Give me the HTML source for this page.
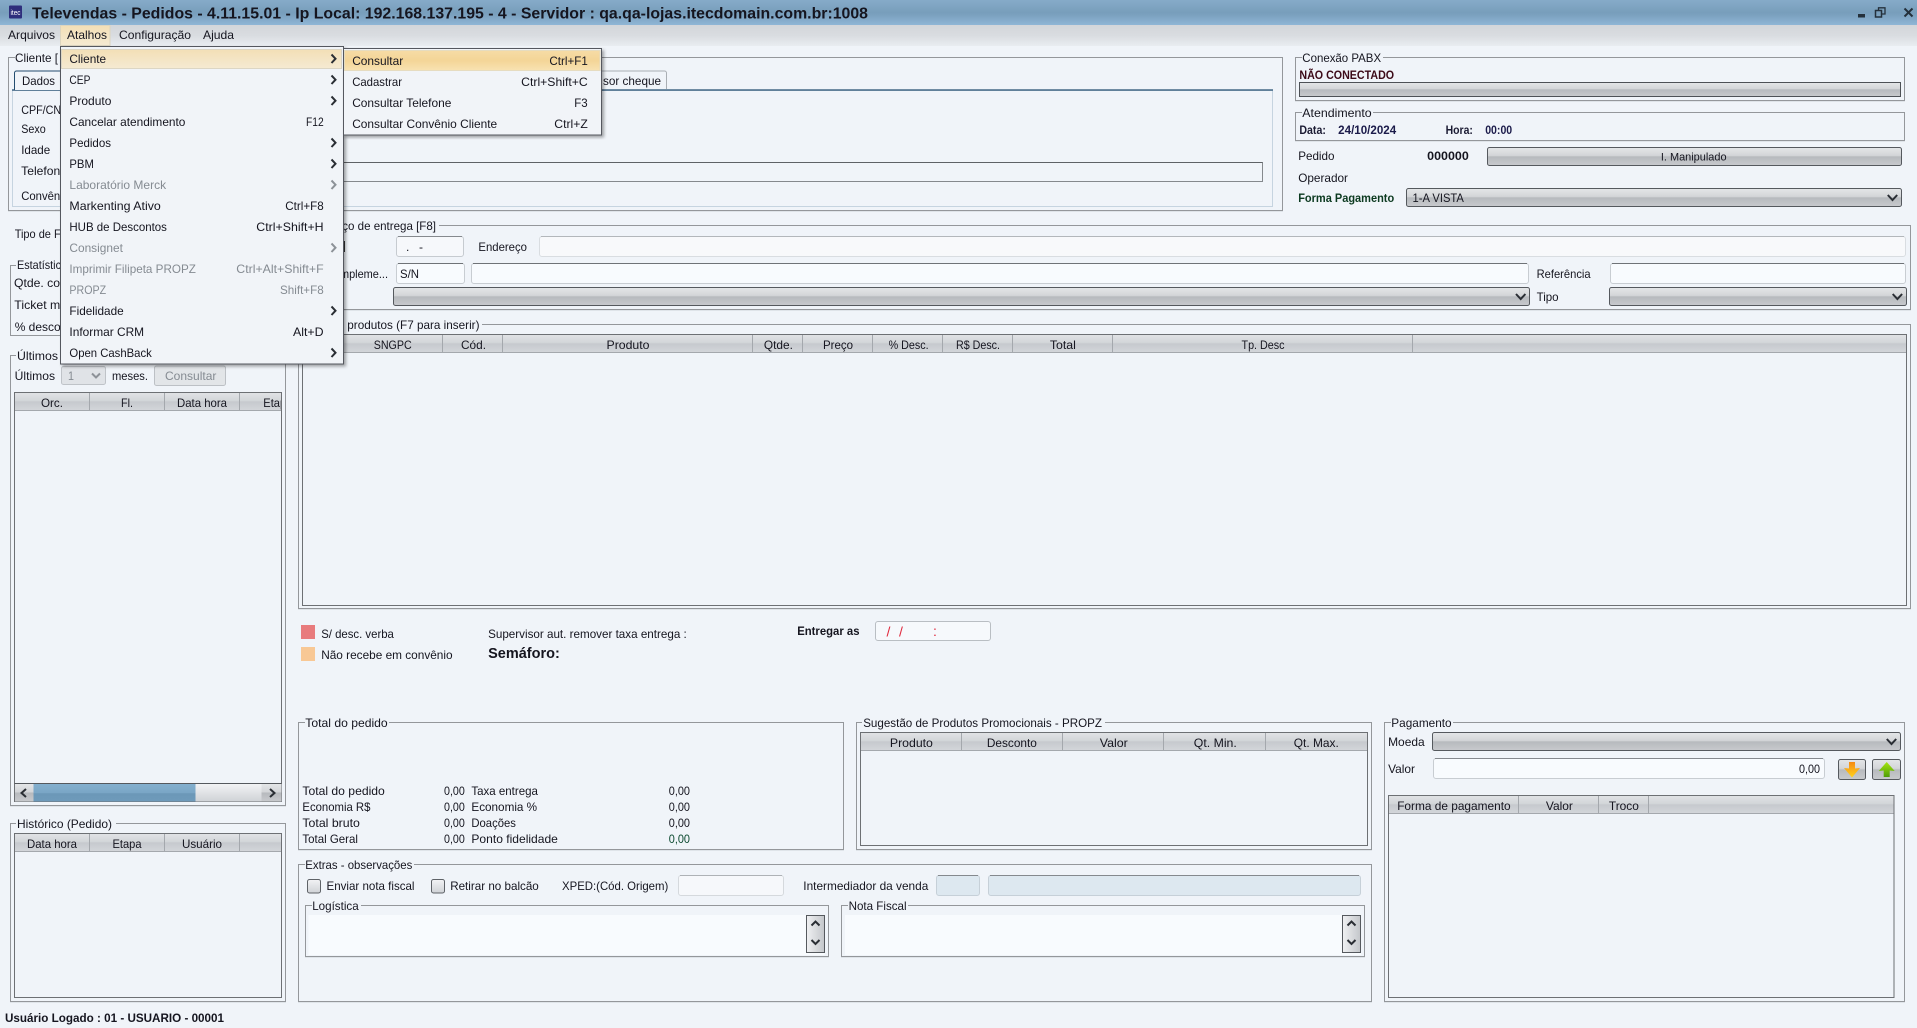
<!DOCTYPE html>
<html lang="pt-BR"><head><meta charset="utf-8"><title>Televendas - Pedidos</title>
<style>
html,body{margin:0;padding:0;background:#f0f4f9;overflow:hidden}
svg{display:block}
text{font-family:"Liberation Sans",sans-serif;font-size:12px;fill:#15151f}
.b{font-weight:bold}
.g{fill:#858b92}
.ln{fill:none;stroke:#94979b;stroke-width:1}
.lt{fill:none;stroke:#dfe4e9;stroke-width:1}
.ch{fill:none;stroke:#2a2e34;stroke-width:2}
.chg{fill:none;stroke:#8d9298;stroke-width:2}
.tb{fill:none;stroke:#6d7074;stroke-width:1}
.sep{stroke:#a4a8ad;stroke-width:1}
</style></head><body>
<svg xmlns="http://www.w3.org/2000/svg" width="1917" height="1028" viewBox="0 0 1917 1028">
<defs>
<linearGradient id="tg" x1="0" y1="0" x2="0" y2="1"><stop offset="0" stop-color="#86abc9"/><stop offset=".5" stop-color="#789ebb"/><stop offset=".6" stop-color="#7ba1bf"/><stop offset="1" stop-color="#8fb6d6"/></linearGradient>
<linearGradient id="mg" x1="0" y1="0" x2="0" y2="1"><stop offset="0" stop-color="#d3d6da"/><stop offset=".5" stop-color="#d9dce0"/><stop offset="1" stop-color="#e9edf1"/></linearGradient>
<linearGradient id="cb" x1="0" y1="0" x2="0" y2="1"><stop offset="0" stop-color="#e4e6e8"/><stop offset=".45" stop-color="#d3d5d8"/><stop offset=".52" stop-color="#b7babe"/><stop offset="1" stop-color="#c8cacd"/></linearGradient>
<linearGradient id="hd" x1="0" y1="0" x2="0" y2="1"><stop offset="0" stop-color="#e1e3e6"/><stop offset=".45" stop-color="#d3d6d9"/><stop offset=".52" stop-color="#c6c9ce"/><stop offset="1" stop-color="#d3d6da"/></linearGradient>
<linearGradient id="hl" x1="0" y1="0" x2="0" y2="1"><stop offset="0" stop-color="#f6dca6"/><stop offset=".5" stop-color="#f4d597"/><stop offset="1" stop-color="#f8e2b2"/></linearGradient>
<linearGradient id="hl2" x1="0" y1="0" x2="0" y2="1"><stop offset="0" stop-color="#f3dfb6"/><stop offset="1" stop-color="#f5ead2"/></linearGradient>
<linearGradient id="th" x1="0" y1="0" x2="0" y2="1"><stop offset="0" stop-color="#84b0cf"/><stop offset=".5" stop-color="#7aa6c6"/><stop offset=".55" stop-color="#6c98b8"/><stop offset="1" stop-color="#6e9aba"/></linearGradient>
<linearGradient id="tr" x1="0" y1="0" x2="0" y2="1"><stop offset="0" stop-color="#f2f3f5"/><stop offset="1" stop-color="#cfd2d6"/></linearGradient>
<linearGradient id="vs" x1="0" y1="0" x2="1" y2="0"><stop offset="0" stop-color="#f0f1f3"/><stop offset="1" stop-color="#c3c6ca"/></linearGradient>
<linearGradient id="org" x1="0" y1="0" x2="0" y2="1"><stop offset="0" stop-color="#f58a12"/><stop offset="1" stop-color="#ffd21e"/></linearGradient>
<linearGradient id="grn" x1="0" y1="0" x2="0" y2="1"><stop offset="0" stop-color="#a6e60e"/><stop offset="1" stop-color="#4f9e08"/></linearGradient>
<clipPath id="c1"><rect x="14" y="392" width="267" height="20"/></clipPath>
<filter id="sh" x="-5%" y="-5%" width="110%" height="110%"><feDropShadow dx="2" dy="2" stdDeviation="1.5" flood-color="#000" flood-opacity=".35"/></filter>
</defs>

<rect width="1917" height="1028" fill="#f0f4f9"/>
<!-- title bar -->
<rect width="1917" height="25" fill="url(#tg)"/>
<rect x="9" y="5.5" width="13" height="13" rx="1" fill="#2e2e7c"/>
<text x="10.5" y="15" style="font-size:7px;fill:#fff" textLength="10" lengthAdjust="spacingAndGlyphs">itec</text>
<text class="b" x="32" y="18.5" style="font-size:15.5px" textLength="836" lengthAdjust="spacingAndGlyphs">Televendas - Pedidos - 4.11.15.01 - Ip Local: 192.168.137.195 - 4 - Servidor : qa.qa-lojas.itecdomain.com.br:1008</text>
<rect x="1858" y="14" width="7" height="3.5" fill="#24303b"/>
<rect x="1875.5" y="10.5" width="6" height="6.5" fill="none" stroke="#24303b" stroke-width="1.5"/>
<path d="M1878.5 10V7.8H1885V14H1882" fill="none" stroke="#24303b" stroke-width="1.3"/>
<path d="M1904.5 8.5L1912.5 16.5M1912.5 8.5L1904.5 16.5" stroke="#24303b" stroke-width="2" fill="none"/>
<!-- menu bar -->
<rect y="25" width="1917" height="21" fill="url(#mg)"/>
<rect x="60.5" y="25.5" width="49.5" height="20" fill="url(#hl2)" stroke="#ddd5bf"/>
<text x="8" y="39" textLength="47" lengthAdjust="spacingAndGlyphs">Arquivos</text>
<text x="67" y="39" textLength="40" lengthAdjust="spacingAndGlyphs">Atalhos</text>
<text x="119" y="39" textLength="72" lengthAdjust="spacingAndGlyphs">Configuração</text>
<text x="203" y="39" textLength="31" lengthAdjust="spacingAndGlyphs">Ajuda</text>

<!-- Cliente group -->
<path class="ln" d="M15 57.5H8.5V210.5H1282.5V57.5H60"/>
<path class="lt" d="M8 211.5H1283"/>
<text x="15" y="62" textLength="43" lengthAdjust="spacingAndGlyphs">Cliente [</text>
<path d="M12.5 90.5H1272.5V206.5H12.5Z" fill="none" stroke="#c6d4e0"/>
<path d="M12 90H1273" stroke="#234d70" stroke-width="1.2"/>
<path d="M14.5 90V73a2 2 0 0 1 2-2H64V90" fill="#f0f4f9" stroke="#234d70"/>
<text x="22" y="85" textLength="33" lengthAdjust="spacingAndGlyphs">Dados</text>
<path d="M340 71H664.5a2 2 0 0 1 2 2V89" fill="#f0f4f9" stroke="#a9aeb3"/>
<text x="603" y="85" textLength="58" lengthAdjust="spacingAndGlyphs">sor cheque</text>
<text x="21.2" y="114" textLength="40" lengthAdjust="spacingAndGlyphs">CPF/CN</text>
<text x="21.2" y="133" textLength="24.5" lengthAdjust="spacingAndGlyphs">Sexo</text>
<text x="21.2" y="154" textLength="29" lengthAdjust="spacingAndGlyphs">Idade</text>
<text x="21.2" y="175" textLength="39" lengthAdjust="spacingAndGlyphs">Telefon</text>
<text x="21.2" y="200" textLength="39" lengthAdjust="spacingAndGlyphs">Convên</text>
<path d="M340 162.5H1262.5V181.5H340" fill="none" stroke="#5e6266"/>
<path d="M340 181.5H1262.5V162.5" fill="none" stroke="#85898d"/>

<text x="14.7" y="238" textLength="46" lengthAdjust="spacingAndGlyphs">Tipo de F</text>

<!-- Estatisticas -->
<path class="ln" d="M16 265.5H10.5V335.5H62"/>
<text x="17" y="269" textLength="44" lengthAdjust="spacingAndGlyphs">Estatístic</text>
<text x="14" y="287" textLength="46" lengthAdjust="spacingAndGlyphs">Qtde. co</text>
<text x="14.3" y="309" textLength="46" lengthAdjust="spacingAndGlyphs">Ticket m</text>
<text x="14.7" y="331" textLength="46" lengthAdjust="spacingAndGlyphs">% desco</text>

<!-- Ultimos group -->
<path class="ln" d="M16 355.5H10.5V805.5H285.5V355.5H60"/>
<path class="lt" d="M10 806.5H286"/>
<text x="17" y="360" textLength="41" lengthAdjust="spacingAndGlyphs">Últimos</text>
<text x="14.7" y="380" textLength="40.4" lengthAdjust="spacingAndGlyphs">Últimos</text>
<rect x="61.5" y="366.5" width="44" height="18" rx="2" fill="#e0e3e7" stroke="#bfc3c8"/>
<text class="g" x="68" y="380" textLength="6" lengthAdjust="spacingAndGlyphs">1</text>
<path class="chg" d="M92 373.5L96 377.5L100 373.5"/>
<text x="112" y="380" textLength="36" lengthAdjust="spacingAndGlyphs">meses.</text>
<rect x="154.5" y="366" width="71" height="19.5" rx="2" fill="#e2e5e8" stroke="#bcc0c5"/>
<text class="g" x="165" y="380" textLength="51.4" lengthAdjust="spacingAndGlyphs">Consultar</text>

<rect x="14.5" y="392.5" width="267" height="18" fill="url(#hd)"/>
<path class="sep" d="M89.5 393V410M164.5 393V410M239.5 393V410M14.5 410.5H281.5"/>
<text x="52" y="407" text-anchor="middle" textLength="22" lengthAdjust="spacingAndGlyphs">Orc.</text>
<text x="127" y="407" text-anchor="middle" textLength="12" lengthAdjust="spacingAndGlyphs">Fl.</text>
<text x="202" y="407" text-anchor="middle" textLength="50" lengthAdjust="spacingAndGlyphs">Data hora</text>
<text x="263.3" y="407" clip-path="url(#c1)" textLength="29" lengthAdjust="spacingAndGlyphs">Etapa</text>
<rect x="14.5" y="392.5" width="267" height="409" class="tb"/>
<rect x="15" y="784" width="266" height="17.5" fill="url(#tr)"/>
<rect x="15" y="784" width="18.5" height="17.5" fill="url(#cb)"/>
<rect x="33.5" y="784" width="162" height="17.5" fill="url(#th)"/>
<rect x="261.5" y="784" width="20" height="17.5" fill="url(#cb)"/>
<path d="M14.5 783.5H281.5" stroke="#55595e"/>
<path class="ch" d="M26 789L21.5 793L26 797"/>
<path class="ch" d="M270 789L274.5 793L270 797"/>

<!-- Historico -->
<path class="ln" d="M16 823.5H10.5V1001.5H285.5V823.5H116"/>
<path class="lt" d="M10 1002.5H286"/>
<text x="17" y="828" textLength="95" lengthAdjust="spacingAndGlyphs">Histórico (Pedido)</text>
<rect x="14.5" y="833.5" width="267" height="18" fill="url(#hd)"/>
<path class="sep" d="M89.5 834V851M164.5 834V851M239.5 834V851M14.5 851.5H281.5"/>
<text x="52" y="848" text-anchor="middle" textLength="50" lengthAdjust="spacingAndGlyphs">Data hora</text>
<text x="127" y="848" text-anchor="middle" textLength="29" lengthAdjust="spacingAndGlyphs">Etapa</text>
<text x="202" y="848" text-anchor="middle" textLength="40" lengthAdjust="spacingAndGlyphs">Usuário</text>
<rect x="14.5" y="833.5" width="267" height="164" class="tb"/>
<text class="b" x="5" y="1022" textLength="219" lengthAdjust="spacingAndGlyphs">Usuário Logado : 01 - USUARIO - 00001</text>

<!-- Endereco group -->
<path class="ln" d="M298.5 225.5V309.5H1910.5V225.5H439"/>
<path class="lt" d="M298 310.5H1911"/>
<text x="305" y="230" textLength="131" lengthAdjust="spacingAndGlyphs">Endereço de entrega [F8]</text>
<path d="M344.5 241V252" stroke="#333"/>
<rect x="396.5" y="236.5" width="67" height="20" rx="2.5" fill="#f6f8fb" stroke="#c6cbd0"/>
<path d="M398 236.5H462" stroke="#85898e"/>
<text x="406" y="251">.</text><text x="419" y="251">-</text>
<text x="478.4" y="251" textLength="48.6" lengthAdjust="spacingAndGlyphs">Endereço</text>
<rect x="539.5" y="236.5" width="1366" height="20" rx="2.5" fill="#f8f9fb" stroke="#d9dde1"/>
<path d="M541 236.5H1904" stroke="#b3b7bb"/>
<text x="326" y="278" textLength="62" lengthAdjust="spacingAndGlyphs">Compleme...</text>
<rect x="396.5" y="263.5" width="68" height="20" rx="2.5" fill="#f8fbfe" stroke="#c8cdd2"/>
<path d="M398 263.5H463" stroke="#6f7377"/>
<text x="400" y="278" textLength="19" lengthAdjust="spacingAndGlyphs">S/N</text>
<rect x="471.5" y="263.5" width="1057" height="20" rx="2.5" fill="#f8fbfe" stroke="#c8cdd2"/>
<path d="M473 263.5H1527" stroke="#6f7377"/>
<text x="1536.6" y="278" textLength="54" lengthAdjust="spacingAndGlyphs">Referência</text>
<rect x="1610.5" y="263.5" width="295" height="20" rx="2.5" fill="#f8fbfe" stroke="#c8cdd2"/>
<path d="M1612 263.5H1904" stroke="#6f7377"/>
<rect x="393.5" y="287.5" width="1136" height="18" rx="2" fill="url(#cb)" stroke="#55595e"/>
<path class="ch" d="M1516 294L1520.7 299L1525.4 294"/>
<text x="1536.6" y="301" textLength="22" lengthAdjust="spacingAndGlyphs">Tipo</text>
<rect x="1609.5" y="287.5" width="297" height="18" rx="2" fill="url(#cb)" stroke="#55595e"/>
<path class="ch" d="M1892.7 294L1897.4 299L1902.1 294"/>

<!-- Produtos -->
<path class="ln" d="M298.5 324.5V608.5H1910.5V324.5H482"/>
<path class="lt" d="M298 609.5H1911"/>
<text x="337.5" y="329" textLength="142" lengthAdjust="spacingAndGlyphs">e produtos (F7 para inserir)</text>
<rect x="302.5" y="334.5" width="1604" height="18" fill="url(#hd)"/>
<path class="sep" d="M442.5 335V352M502.5 335V352M752.5 335V352M802.5 335V352M872.5 335V352M942.5 335V352M1012.5 335V352M1112.5 335V352M1412.5 335V352M302.5 352.5H1906"/>
<text x="392.7" y="349" text-anchor="middle" textLength="38" lengthAdjust="spacingAndGlyphs">SNGPC</text>
<text x="473.5" y="349" text-anchor="middle" textLength="25" lengthAdjust="spacingAndGlyphs">Cód.</text>
<text x="628" y="349" text-anchor="middle" textLength="43" lengthAdjust="spacingAndGlyphs">Produto</text>
<text x="778.4" y="349" text-anchor="middle" textLength="29" lengthAdjust="spacingAndGlyphs">Qtde.</text>
<text x="838" y="349" text-anchor="middle" textLength="30" lengthAdjust="spacingAndGlyphs">Preço</text>
<text x="908.6" y="349" text-anchor="middle" textLength="40" lengthAdjust="spacingAndGlyphs">% Desc.</text>
<text x="978" y="349" text-anchor="middle" textLength="44" lengthAdjust="spacingAndGlyphs">R$ Desc.</text>
<text x="1062.9" y="349" text-anchor="middle" textLength="26" lengthAdjust="spacingAndGlyphs">Total</text>
<text x="1263" y="349" text-anchor="middle" textLength="43" lengthAdjust="spacingAndGlyphs">Tp. Desc</text>
<rect x="302.5" y="334.5" width="1604" height="271" class="tb"/>

<!-- Conexao PABX -->
<path class="ln" d="M1302 57.5H1295.5V100.5H1904.5V57.5H1383"/>
<path class="lt" d="M1295 101.5H1905"/>
<text x="1302.3" y="62" textLength="78.8" lengthAdjust="spacingAndGlyphs">Conexão PABX</text>
<text class="b" x="1299.4" y="79" style="fill:#3c0a18" textLength="94.7" lengthAdjust="spacingAndGlyphs">NÃO CONECTADO</text>
<rect x="1299.5" y="82.5" width="601" height="14" fill="url(#cb)" stroke="#4d5156"/>
<!-- Atendimento -->
<path class="ln" d="M1302 112.5H1295.5V140.5H1904.5V112.5H1373"/>
<path class="lt" d="M1295 141.5H1905"/>
<text x="1302.3" y="117" textLength="69.4" lengthAdjust="spacingAndGlyphs">Atendimento</text>
<text class="b" x="1299.4" y="134" style="font-size:11.5px;fill:#1b1b33" textLength="26.5" lengthAdjust="spacingAndGlyphs">Data:</text>
<text class="b" x="1338.2" y="134" style="font-size:11.5px;fill:#1b1b4a" textLength="58" lengthAdjust="spacingAndGlyphs">24/10/2024</text>
<text class="b" x="1445.6" y="134" style="font-size:11.5px;fill:#1b1b33" textLength="27.3" lengthAdjust="spacingAndGlyphs">Hora:</text>
<text class="b" x="1485.2" y="134" style="font-size:11.5px;fill:#1b1b4a" textLength="27" lengthAdjust="spacingAndGlyphs">00:00</text>
<text x="1298.2" y="160" textLength="36.3" lengthAdjust="spacingAndGlyphs">Pedido</text>
<text class="b" x="1427.2" y="160" textLength="41.6" lengthAdjust="spacingAndGlyphs">000000</text>
<rect x="1487.5" y="147.5" width="414" height="18" rx="2" fill="url(#cb)" stroke="#55595e"/>
<text x="1693.7" y="160.5" text-anchor="middle" style="font-size:11px" textLength="65.7" lengthAdjust="spacingAndGlyphs">I. Manipulado</text>
<text x="1298.2" y="182" textLength="49.8" lengthAdjust="spacingAndGlyphs">Operador</text>
<text class="b" x="1298.2" y="202" style="fill:#0c3a20" textLength="96" lengthAdjust="spacingAndGlyphs">Forma Pagamento</text>
<rect x="1406.5" y="188.5" width="495" height="18" rx="2" fill="url(#cb)" stroke="#55595e"/>
<text x="1412.5" y="202" textLength="51.4" lengthAdjust="spacingAndGlyphs">1-A VISTA</text>
<path class="ch" d="M1887.8 195L1892.5 200L1897.2 195"/>

<!-- Legend -->
<rect x="301" y="625" width="14" height="14" fill="#e87b7d"/>
<rect x="301" y="647" width="14" height="14" fill="#f8c895"/>
<text x="321.2" y="638" textLength="72.7" lengthAdjust="spacingAndGlyphs">S/ desc. verba</text>
<text x="321.2" y="659" textLength="131.4" lengthAdjust="spacingAndGlyphs">Não recebe em convênio</text>
<text x="488.1" y="638" textLength="198.7" lengthAdjust="spacingAndGlyphs">Supervisor aut. remover taxa entrega :</text>
<text class="b" x="488.1" y="658" style="font-size:15px" textLength="71.7" lengthAdjust="spacingAndGlyphs">Semáforo:</text>
<text class="b" x="797.2" y="635" textLength="62.3" lengthAdjust="spacingAndGlyphs">Entregar as</text>
<rect x="875.5" y="621.5" width="115" height="19" rx="2.5" fill="#f6f9fc" stroke="#b9bec3"/>
<text x="886.5" y="636.5" style="fill:#e0283c;font-size:14px">/</text>
<text x="899" y="636.5" style="fill:#e0283c;font-size:14px">/</text>
<text x="933" y="636" style="fill:#e0283c;font-size:14px">:</text>

<!-- Total do pedido -->
<path class="ln" d="M305 722.5H298.5V849.5H843.5V722.5H389"/>
<path class="lt" d="M298 850.5H844"/>
<text x="305.3" y="727" textLength="82.4" lengthAdjust="spacingAndGlyphs">Total do pedido</text>
<text x="302.4" y="795" textLength="82.4" lengthAdjust="spacingAndGlyphs">Total do pedido</text>
<text x="302.4" y="811" textLength="68" lengthAdjust="spacingAndGlyphs">Economia R$</text>
<text x="302.4" y="827" textLength="57.5" lengthAdjust="spacingAndGlyphs">Total bruto</text>
<text x="302.4" y="843" textLength="55.5" lengthAdjust="spacingAndGlyphs">Total Geral</text>
<text x="444" y="795" textLength="20.8" lengthAdjust="spacingAndGlyphs">0,00</text>
<text x="444" y="811" textLength="20.8" lengthAdjust="spacingAndGlyphs">0,00</text>
<text x="444" y="827" textLength="20.8" lengthAdjust="spacingAndGlyphs">0,00</text>
<text x="444" y="843" textLength="20.8" lengthAdjust="spacingAndGlyphs">0,00</text>
<text x="471.4" y="795" textLength="66.5" lengthAdjust="spacingAndGlyphs">Taxa entrega</text>
<text x="471.4" y="811" textLength="65.7" lengthAdjust="spacingAndGlyphs">Economia %</text>
<text x="471.4" y="827" textLength="44.5" lengthAdjust="spacingAndGlyphs">Doações</text>
<text x="471.4" y="843" textLength="86.5" lengthAdjust="spacingAndGlyphs">Ponto fidelidade</text>
<text x="668.8" y="795" textLength="21.2" lengthAdjust="spacingAndGlyphs">0,00</text>
<text x="668.8" y="811" textLength="21.2" lengthAdjust="spacingAndGlyphs">0,00</text>
<text x="668.8" y="827" textLength="21.2" lengthAdjust="spacingAndGlyphs">0,00</text>
<text x="668.8" y="843" style="fill:#0c4a30" textLength="21.2" lengthAdjust="spacingAndGlyphs">0,00</text>

<!-- Sugestao -->
<path class="ln" d="M862 722.5H856.5V849.5H1371.5V722.5H1105"/>
<path class="lt" d="M856 850.5H1372"/>
<text x="863.2" y="727" textLength="238.8" lengthAdjust="spacingAndGlyphs">Sugestão de Produtos Promocionais - PROPZ</text>
<rect x="860.5" y="732.5" width="507" height="18" fill="url(#hd)"/>
<path class="sep" d="M961.5 733V750M1062.5 733V750M1163.5 733V750M1265.5 733V750M860.5 750.5H1367"/>
<text x="911.4" y="747" text-anchor="middle" textLength="43" lengthAdjust="spacingAndGlyphs">Produto</text>
<text x="1011.9" y="747" text-anchor="middle" textLength="50" lengthAdjust="spacingAndGlyphs">Desconto</text>
<text x="1113.8" y="747" text-anchor="middle" textLength="28" lengthAdjust="spacingAndGlyphs">Valor</text>
<text x="1215.3" y="747" text-anchor="middle" textLength="43" lengthAdjust="spacingAndGlyphs">Qt. Min.</text>
<text x="1316.3" y="747" text-anchor="middle" textLength="45" lengthAdjust="spacingAndGlyphs">Qt. Max.</text>
<rect x="860.5" y="732.5" width="507" height="113" class="tb"/>

<!-- Pagamento -->
<path class="ln" d="M1391 722.5H1384.5V1001.5H1904.5V722.5H1453"/>
<path class="lt" d="M1384 1002.5H1905"/>
<text x="1391.3" y="727" textLength="60.3" lengthAdjust="spacingAndGlyphs">Pagamento</text>
<text x="1388.1" y="746" textLength="36.6" lengthAdjust="spacingAndGlyphs">Moeda</text>
<rect x="1432.5" y="732.5" width="468" height="18" rx="2" fill="url(#cb)" stroke="#55595e"/>
<path class="ch" d="M1886.8 739L1891.5 744L1896.2 739"/>
<text x="1388.1" y="773" textLength="26.9" lengthAdjust="spacingAndGlyphs">Valor</text>
<rect x="1433.5" y="758.5" width="391" height="20" rx="2.5" fill="#f8fbfe" stroke="#c8cdd2"/>
<path d="M1435 758.5H1823" stroke="#85898e"/>
<text x="1799" y="773" textLength="21" lengthAdjust="spacingAndGlyphs">0,00</text>
<rect x="1838.5" y="759.5" width="27" height="20" rx="2" fill="url(#cb)" stroke="#55595e"/>
<rect x="1872.5" y="759.5" width="28" height="20" rx="2" fill="url(#cb)" stroke="#55595e"/>
<path d="M1849 762H1855V768.500L1860 768L1852 777.500L1844 768L1849 768.500Z" fill="url(#org)"/>
<path d="M1886.700 762L1894.700 771L1889.700 770.500V777H1883.700V770.500L1878.700 771Z" fill="url(#grn)"/>
<rect x="1388.5" y="795.5" width="505.500" height="18" fill="url(#hd)"/>
<path class="sep" d="M1518.5 796V813M1598.5 796V813M1648.5 796V813M1388.5 813.5H1894"/>
<text x="1397.2" y="810" textLength="113.4" lengthAdjust="spacingAndGlyphs">Forma de pagamento</text>
<text x="1559.4" y="810" text-anchor="middle" textLength="27" lengthAdjust="spacingAndGlyphs">Valor</text>
<text x="1623.9" y="810" text-anchor="middle" textLength="30" lengthAdjust="spacingAndGlyphs">Troco</text>
<rect x="1388.5" y="795.5" width="505.500" height="202" class="tb"/>

<!-- Extras -->
<path class="ln" d="M305 864.5H298.5V1001.5H1371.5V864.5H414"/>
<path class="lt" d="M298 1002.5H1372"/>
<text x="305.3" y="869" textLength="107" lengthAdjust="spacingAndGlyphs">Extras - observações</text>
<rect x="307.5" y="879.5" width="13" height="13.5" rx="2" fill="url(#tr)" stroke="#5e6267"/>
<text x="326.5" y="890" textLength="88" lengthAdjust="spacingAndGlyphs">Enviar nota fiscal</text>
<rect x="431.5" y="879.5" width="13" height="13.5" rx="2" fill="url(#tr)" stroke="#5e6267"/>
<text x="450.2" y="890" textLength="88.6" lengthAdjust="spacingAndGlyphs">Retirar no balcão</text>
<text x="562" y="890" textLength="106.3" lengthAdjust="spacingAndGlyphs">XPED:(Cód. Origem)</text>
<rect x="678.5" y="875.5" width="105" height="20" rx="2.5" fill="#f6f8fb" stroke="#d5d9dd"/>
<path d="M680 875.5H782" stroke="#aeb2b6"/>
<text x="803.3" y="890" textLength="125" lengthAdjust="spacingAndGlyphs">Intermediador da venda</text>
<rect x="936.5" y="875.5" width="43" height="20" rx="2.5" fill="#dde8f0" stroke="#c6d0d8"/>
<path d="M938 875.5H978" stroke="#85898e"/>
<rect x="988.5" y="875.5" width="372" height="20" rx="2.5" fill="#dde8f0" stroke="#c6d0d8"/>
<path d="M990 875.5H1359" stroke="#85898e"/>

<rect x="308.5" y="915" width="516" height="40" fill="#f8fbfe"/>
<path class="ln" d="M312 905.5H305.5V956.5H828.5V905.5H361"/>
<path class="lt" d="M305 957.5H829"/>
<text x="312.2" y="910" textLength="46.5" lengthAdjust="spacingAndGlyphs">Logística</text>
<rect x="806.5" y="915.5" width="18" height="37" fill="url(#vs)" stroke="#55595e"/>
<path class="ch" d="M811.5 925.500L815.5 921.500L819.5 925.500M811.5 940L815.5 944L819.5 940"/>

<rect x="845" y="915" width="516" height="40" fill="#f8fbfe"/>
<path class="ln" d="M848 905.5H841.5V956.5H1364.5V905.5H908"/>
<path class="lt" d="M841 957.5H1365"/>
<text x="848.6" y="910" textLength="58" lengthAdjust="spacingAndGlyphs">Nota Fiscal</text>
<rect x="1342.5" y="915.5" width="18" height="37" fill="url(#vs)" stroke="#55595e"/>
<path class="ch" d="M1347.5 925.500L1351.5 921.500L1355.5 925.500M1347.5 940L1351.5 944L1355.5 940"/>

<!-- main menu -->
<rect x="60.5" y="46.5" width="283" height="317.5" fill="#f1f4f8" stroke="#55595e" filter="url(#sh)"/>
<rect x="61.5" y="49.5" width="280" height="19" fill="url(#hl2)" stroke="#dcd6c4"/>
<text x="69.4" y="63" textLength="36.7" lengthAdjust="spacingAndGlyphs">Cliente</text>
<text x="69.4" y="84" textLength="21" lengthAdjust="spacingAndGlyphs">CEP</text>
<text x="69.4" y="105" textLength="42" lengthAdjust="spacingAndGlyphs">Produto</text>
<text x="69.4" y="126" textLength="116" lengthAdjust="spacingAndGlyphs">Cancelar atendimento</text>
<text x="306" y="126" textLength="17.7" lengthAdjust="spacingAndGlyphs">F12</text>
<text x="69.4" y="147" textLength="41.6" lengthAdjust="spacingAndGlyphs">Pedidos</text>
<text x="69.4" y="168" textLength="24.5" lengthAdjust="spacingAndGlyphs">PBM</text>
<text class="g" x="69.4" y="189" textLength="96.7" lengthAdjust="spacingAndGlyphs">Laboratório Merck</text>
<text x="69.4" y="210" textLength="91.4" lengthAdjust="spacingAndGlyphs">Markenting Ativo</text>
<text x="285.3" y="210" textLength="38.4" lengthAdjust="spacingAndGlyphs">Ctrl+F8</text>
<text x="69.4" y="231" textLength="97.5" lengthAdjust="spacingAndGlyphs">HUB de Descontos</text>
<text x="256.3" y="231" textLength="67.3" lengthAdjust="spacingAndGlyphs">Ctrl+Shift+H</text>
<text class="g" x="69.4" y="252" textLength="53.5" lengthAdjust="spacingAndGlyphs">Consignet</text>
<text class="g" x="69.4" y="273" textLength="126.5" lengthAdjust="spacingAndGlyphs">Imprimir Filipeta PROPZ</text>
<text class="g" x="236.3" y="273" textLength="87.3" lengthAdjust="spacingAndGlyphs">Ctrl+Alt+Shift+F</text>
<text class="g" x="69.4" y="294" textLength="36.7" lengthAdjust="spacingAndGlyphs">PROPZ</text>
<text class="g" x="280" y="294" textLength="43.7" lengthAdjust="spacingAndGlyphs">Shift+F8</text>
<text x="69.4" y="315" textLength="54.3" lengthAdjust="spacingAndGlyphs">Fidelidade</text>
<text x="69.4" y="336" textLength="74.7" lengthAdjust="spacingAndGlyphs">Informar CRM</text>
<text x="293" y="336" textLength="30.6" lengthAdjust="spacingAndGlyphs">Alt+D</text>
<text x="69.4" y="357" textLength="82.4" lengthAdjust="spacingAndGlyphs">Open CashBack</text>
<path class="ch" d="M331.5 54.500L335.5 58.700L331.5 63M331.5 75.500L335.5 79.700L331.5 84M331.5 96.500L335.5 100.700L331.5 105M331.5 138.500L335.5 142.700L331.5 147M331.5 159.500L335.5 163.700L331.5 168M331.5 306.500L335.5 310.700L331.5 315M331.5 348.500L335.5 352.700L331.5 357"/>
<path class="chg" d="M331.5 180.500L335.5 184.700L331.5 189M331.5 243.500L335.5 247.700L331.5 252"/>

<!-- submenu -->
<rect x="343.5" y="48.5" width="258" height="86.5" fill="#f1f4f8" stroke="#55595e" filter="url(#sh)"/>
<rect x="344.5" y="50.5" width="255.5" height="20" fill="url(#hl)" stroke="#e6dcc0"/>
<text x="352.2" y="65" textLength="51" lengthAdjust="spacingAndGlyphs">Consultar</text>
<text x="549.4" y="65" textLength="38.4" lengthAdjust="spacingAndGlyphs">Ctrl+F1</text>
<text x="352.2" y="86" textLength="49.8" lengthAdjust="spacingAndGlyphs">Cadastrar</text>
<text x="521.2" y="86" textLength="66.5" lengthAdjust="spacingAndGlyphs">Ctrl+Shift+C</text>
<text x="352.2" y="107" textLength="99.2" lengthAdjust="spacingAndGlyphs">Consultar Telefone</text>
<text x="574.3" y="107" textLength="13.4" lengthAdjust="spacingAndGlyphs">F3</text>
<text x="352.2" y="128" textLength="145" lengthAdjust="spacingAndGlyphs">Consultar Convênio Cliente</text>
<text x="554.3" y="128" textLength="33.5" lengthAdjust="spacingAndGlyphs">Ctrl+Z</text>
</svg>
</body></html>
